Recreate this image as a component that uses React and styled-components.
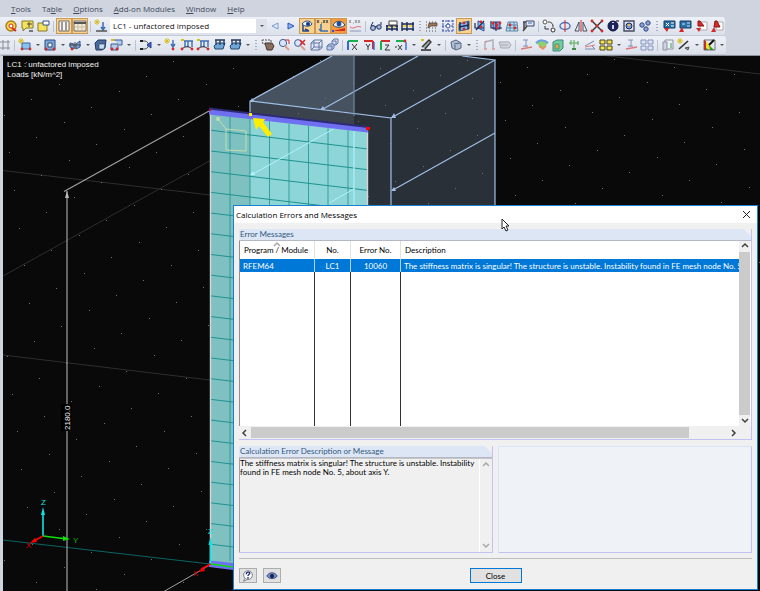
import React from "react";
import styled, { createGlobalStyle } from "styled-components";

const colors = {
    frame: "#cfd4de",
    scene: "#090909",
    ink: "#1c2b5a",
    red: "#d42a2a",
    green: "#17b04a",
    blue: "#3f6fb5",
    yellow: "#f2d83c",
    teal: "#1f9291",
    steel: "#a0bfe6",
    select: "#0078d7",
    face: "#f0f0f0",
    lilac: "#c2c2f2",
    caption: "#34597f",
};

const ui = `"Open Sans", "Noto Sans", sans-serif`;
const sans = `"Liberation Sans", Arial, sans-serif`;
const dialogFont = `Lato, "Liberation Sans", sans-serif`;

const GlobalStyle = createGlobalStyle`
    * { box-sizing: border-box; }
    body {
        margin: 0;
        background: ${colors.frame};
        font-family: ${sans};
        font-size: 8px;
    }
    button, select, textarea { font: inherit; }
`;

const star = <path d="M4 1v6M1 4h6M2 2l4 4M6 2L2 6" stroke="#d9bd1c" />;
const dotRed = (x, y) => <circle cx={x} cy={y} r="1.4" fill={colors.red} stroke="none" />;

const icons = {
    target: (
        <>
            <circle cx="8" cy="8" r="5" fill="#f7d64a" stroke="#a8801a" strokeWidth="1.4" />
            <circle cx="8" cy="8" r="2" fill="#fff" stroke={colors.red} />
            <path d="M9 10l4 3" stroke={colors.red} strokeWidth="2" />
        </>
    ),
    note: (
        <>
            <path d="M3 3h11v7H7l-3 3v-3H3z" fill="#f5e35a" stroke="#8a7a24" />
            <path d="M10 4v5M8 6h5" stroke="#444" />
            <path d="M10 13h4" stroke="#777" strokeWidth="2" />
        </>
    ),
    folder: (
        <>
            <path d="M3 5h9v8H3z" fill="#f5e35a" stroke="#8a7a24" />
            <path d="M8 3h6v4H8z" fill="#fff" stroke="#34527e" />
        </>
    ),
    columns: (
        <>
            <path d="M3 3h10v10H3z" fill="#f6f6f6" stroke="#6d6a66" />
            <path d="M6 4v9M10 4v9" stroke="#9c9892" strokeWidth="2" />
        </>
    ),
    table: (
        <>
            <path d="M2 3h12v10H2z" fill="#f1ead9" stroke="#6d6a66" />
            <path d="M2 5h12" stroke="#555" strokeWidth="2" />
            <path d="M6 6v7M10 6v7M3 9h11" stroke="#c9bc9f" />
        </>
    ),
    loadcase: (
        <>
            {star}
            <path d="M10 4v7M8 9l2 3 2-3" stroke={colors.blue} strokeWidth="1.5" />
            <path d="M3 13h11" stroke="#555" strokeWidth="1.5" />
        </>
    ),
    prev: <path d="M11 5L5 8l6 3z" fill="#dfe9fa" stroke="#7d9bd0" />,
    next: <path d="M5 5l6 3-6 3z" fill="#8fb2ee" stroke="#2858b8" />,
    eyeForce: (
        <>
            <path d="M3 6c3-4 8-4 10 0-2 3-7 3-10 0z" fill="#e9f2ff" stroke="#244a80" />
            <circle cx="9" cy="6" r="2" fill="#123a7a" stroke="none" />
            <path d="M4 7v6h6M6 11l4 2" stroke="#244a80" strokeWidth="1.5" />
        </>
    ),
    values: (
        <>
            <path d="M2 2l2 3M4 2L2 5M6 5h1M8 2l2 3M10 2L8 5M11 2l2 3M13 2l-2 3" stroke="#333" strokeWidth="0.8" />
            <path d="M6 6v7h7M4 11l2 2" stroke={colors.blue} strokeWidth="1.5" />
        </>
    ),
    eyeResult: (
        <>
            <path d="M2 7c3-5 9-5 12 0-3 3-9 3-12 0z" fill="#f5f2ea" stroke="#244a80" />
            <circle cx="8" cy="6" r="2.4" fill="#1c4d9c" stroke="none" />
            <path d="M2 13l12-3v3z" fill={colors.red} stroke="none" />
            <path d="M2 12v2" stroke="#3a50d8" strokeWidth="2" />
        </>
    ),
    diagramValues: (
        <>
            <path d="M2 2l2 3M4 2L2 5M6 5h1M8 2l2 3M10 2L8 5M11 2l2 3M13 2l-2 3" stroke="#888" strokeWidth="0.8" />
            <path d="M3 9c4 3 6-2 11 0" stroke="#e06c6c" />
            <path d="M3 13h11" stroke="#8d96b8" />
        </>
    ),
    glasses: (
        <>
            <circle cx="5" cy="10" r="2.4" fill="#a9bfe0" stroke={colors.ink} />
            <circle cx="11" cy="9" r="2.2" fill="#a9bfe0" stroke={colors.ink} />
            <path d="M3 8l2-4M7 9l2-1M13 7V4" stroke={colors.ink} />
        </>
    ),
    calcPrint: (
        <>
            <path d="M3 13V7M8 13V7M13 13V7M2 8h12M2 11h12" stroke={colors.ink} strokeWidth="1.4" />
            <path d="M5 3h8v4H5z" fill="#fff" stroke="#444" />
            <path d="M4 9h2M9 9h2" stroke={colors.yellow} strokeWidth="1.4" />
        </>
    ),
    calcAll: (
        <>
            <path d="M2 13V4M7 13V4M13 13V4M2 6h12M2 11h12" stroke={colors.ink} strokeWidth="1.4" />
            <path d="M3 8h3M9 8h3" stroke={colors.yellow} strokeWidth="2" />
        </>
    ),
    gridHand: (
        <>
            <path d="M2 4h12M2 7h12M2 10h12M2 13h12" stroke="#555" strokeDasharray="1 2" />
            <path d="M5 5h8v3H7l-3 2z" fill="#9c7558" stroke="#4b3a31" strokeWidth="0.7" />
        </>
    ),
    snap: (
        <>
            <path d="M2 3h12M2 8h12M2 13h12M3 2v12M8 2v12M13 2v12" stroke="#3b50a8" strokeDasharray="2 1" />
            <circle cx="8" cy="8" r="2" fill="#fff" stroke="#3b50a8" />
        </>
    ),
    planeXY: (
        <>
            <path d="M3 6l10-3v8L3 13z" fill="#84bdf0" stroke="#2b5c9b" />
            <path d="M4 4v8M12 4v7M3 9l10-2" stroke={colors.ink} strokeWidth="1.4" />
            {dotRed(8, 5)}
            {dotRed(8, 11)}
        </>
    ),
    planeYZ: (
        <>
            <path d="M6 3l6 2v8l-6-3z" fill="#84bdf0" stroke="#2b5c9b" />
            <path d="M3 5v5h9M4 12l8-9" stroke={colors.ink} strokeWidth="1.2" />
            {dotRed(9, 9)}
            {dotRed(9, 4)}
        </>
    ),
    planeXZ: (
        <>
            <path d="M5 4h7v7H5z" fill="#84a5e0" stroke="#253d7c" />
            <path d="M3 3v7h11M8 4v9" stroke={colors.ink} strokeWidth="1.2" />
            {dotRed(5, 5)}
            {dotRed(9, 10)}
            {dotRed(12, 5)}
            {dotRed(9, 7)}
        </>
    ),
    mesh: (
        <>
            <path d="M4 4h9l1 9H2z" fill="#bcdff5" stroke="#5c85a5" />
            <path d="M3 7h10M3 10h11M6 4v9M10 4v9" stroke="#5c85a5" />
            {dotRed(6, 7)}
            {dotRed(11, 10)}
        </>
    ),
    select: (
        <>
            <path d="M6 3h8v5H6z" fill="#e5e8f4" stroke="#38456c" />
            <path d="M3 13L7 8M4 4v8M3 4h3" stroke="#444" strokeWidth="1.5" />
            <path d="M8 5h4" stroke={colors.blue} />
        </>
    ),
    move: (
        <>
            <circle cx="4" cy="4" r="2" fill="#fff" stroke="#555" />
            <circle cx="12" cy="12" r="2" fill="#fff" stroke="#333" />
            <path d="M7 4c4 0 5 2 5 5M4 8v3h4" stroke="#333" />
        </>
    ),
    rotate: (
        <>
            <ellipse cx="8" cy="8" rx="5" ry="3.5" stroke="#4a70b8" strokeWidth="1.4" />
            <path d="M8 2v12" stroke={colors.red} />
        </>
    ),
    mirror: (
        <>
            <path d="M6 4v9H2zM10 4v9h4z" fill="#eef1f8" stroke="#4b4f5e" />
            <path d="M8 2v12" stroke={colors.red} />
        </>
    ),
    split: (
        <>
            <path d="M3 3l10 10M13 3L3 13" stroke="#333" strokeWidth="1.4" />
            {dotRed(3, 3)}
            {dotRed(13, 3)}
            {dotRed(3, 13)}
            {dotRed(13, 13)}
            {dotRed(8, 8)}
        </>
    ),
    info: (
        <>
            <circle cx="8" cy="8" r="5" fill="#1b245c" stroke="#0f1438" />
            <path d="M8 7v4" stroke="#fff" strokeWidth="1.6" />
            <path d="M8 4v1" stroke="#fff" strokeWidth="1.6" />
            <path d="M11 3h3" stroke="#777" strokeWidth="2" />
        </>
    ),
    props: (
        <>
            <path d="M3 3h10v10H3z" fill="#e2e6f2" stroke="#454b66" strokeWidth="1.4" />
            <circle cx="8" cy="8" r="3" fill="#7898cf" stroke={colors.ink} />
            <path d="M7 7h2" stroke="#f0c040" strokeWidth="2" />
        </>
    ),
    gears: (
        <>
            <circle cx="5" cy="7" r="2.2" fill="#8aa2d8" stroke="#34487e" />
            <circle cx="11" cy="5" r="2.2" fill="#8aa2d8" stroke="#34487e" />
            <circle cx="9" cy="11" r="2.2" fill="#8aa2d8" stroke="#34487e" />
        </>
    ),
    tableIn: (
        <>
            <path d="M3 3h11v7H3z" fill="#2870a8" stroke="#173c69" />
            <path d="M5 5l3 3M8 5L5 8M10 5h3M10 8h3" stroke="#fff" />
            <path d="M3 10h5l-2 4z" fill={colors.red} stroke="none" />
        </>
    ),
    tableOut: (
        <>
            <path d="M3 3h11v7H3z" fill="#2870a8" stroke="#173c69" />
            <path d="M5 6h3M10 5h3M10 8h3" stroke="#cfe3f5" />
            <path d="M2 14h5l-2-5z" fill={colors.red} stroke="none" />
        </>
    ),
    pdfIn: (
        <>
            <path d="M7 4h7v8H7z" fill="#fff" stroke="#aaa" />
            <path d="M5 3h2l4 5H5z" fill={colors.red} stroke="#8e1414" />
            <path d="M3 10h5l-2 4z" fill={colors.red} stroke="none" />
        </>
    ),
    pdfOut: (
        <>
            <path d="M7 4h7v8H7z" fill="#fff" stroke="#aaa" />
            <path d="M6 3h2l3 6H5z" fill={colors.red} stroke="#8e1414" />
            <path d="M2 14h5l-2-5z" fill={colors.red} stroke="none" />
        </>
    ),
    hash: <path d="M3 3v10M8 3v10M0 5h10M0 11h10" stroke="#8a8f9c" />,
    surface: (
        <>
            {star}
            <path d="M5 6h8v6H5z" fill="#8ec0ec" stroke="#3769a4" />
            {dotRed(5, 12)}
            {dotRed(13, 12)}
        </>
    ),
    opening: (
        <>
            <path d="M3 3h10v10H3z" fill="#7fa9d8" stroke="#2d4d7d" />
            <path d="M6 6h4v4H6z" fill="#f1f4fa" stroke="#2d4d7d" />
            {dotRed(4, 12)}
            {dotRed(12, 12)}
        </>
    ),
    beam: (
        <>
            <path d="M3 6l4 1v5l-4-2zM9 7l4-3v6l-4 2z" fill="#7fa9d8" stroke="#35588c" />
            <path d="M2 8h12M8 5v7" stroke="#444" />
            {dotRed(5, 12)}
        </>
    ),
    solid: (
        <>
            <path d="M3 6l3-3h8l-1 8-3 2H4z" fill="#4c6a9c" stroke="#24395f" />
            <path d="M7 7h6l-1 5H7z" fill="#c5dcf5" stroke="#24395f" strokeWidth="0.6" />
        </>
    ),
    solidNew: (
        <>
            <path d="M3 7h7v6H3zM6 3h8v5h-3" fill="#b6cdea" stroke="#3a5d8e" />
            <path d="M3 3h3" stroke="#d9bd1c" strokeWidth="2" />
            {dotRed(4, 12)}
            {dotRed(9, 12)}
        </>
    ),
    release: (
        <>
            <path d="M3 4h4c3 0 3 4 5 4M3 12h4c3 0 3-4 5-4" stroke="#555" />
            <path d="M13 5v6l-4-3z" fill="#3d68c8" stroke="#233f86" />
            <path d="M2 4h3M2 12h3" stroke="#222" strokeWidth="2" />
        </>
    ),
    nodeLoad: (
        <>
            {star}
            <path d="M10 3v6M8 7l2 3 2-3" stroke={colors.blue} strokeWidth="1.4" />
            {dotRed(10, 12)}
        </>
    ),
    memberLoad: (
        <>
            <path d="M5 4h9M6 4v6M9 4v6M13 4v6" stroke={colors.blue} strokeWidth="1.4" />
            <path d="M3 12c3-3 7-3 10 0" stroke="#222" />
            <path d="M2 3h3" stroke="#d9bd1c" strokeWidth="2" />
            {dotRed(3, 12)}
            {dotRed(13, 12)}
        </>
    ),
    surfaceLoad: (
        <>
            <path d="M3 9l3-3h8l-2 6H4z" fill="#6fa8d8" stroke="#214a70" />
            <path d="M5 3v5M9 3v5M13 3v5M4 3h10" stroke="#24395f" strokeWidth="1.3" />
        </>
    ),
    handTool: (
        <>
            <path d="M5 6h7l2 3-2 4H7z" fill="#8e6f5d" stroke="#43342c" />
            <path d="M2 3h9v4H3z" stroke="#555" strokeDasharray="2 1" />
        </>
    ),
    zoomWindow: (
        <>
            <circle cx="7" cy="6" r="3.6" fill="#d8e6fb" stroke="#3e5da0" />
            <path d="M9 9l4 4" stroke="#e09a86" strokeWidth="2" />
            <path d="M9 3h4v4" stroke={colors.red} />
        </>
    ),
    zoomOff: (
        <>
            <circle cx="6" cy="6" r="3.4" fill="#d8e6fb" stroke="#3e5da0" />
            <path d="M9 9l4 4" stroke="#e09a86" strokeWidth="2" />
            <path d="M8 3l5 5M13 3L8 8" stroke={colors.red} strokeWidth="1.6" />
        </>
    ),
    cube: (
        <path d="M3 6l3-3h8v8l-3 2H3zM3 6h8v7M11 6l3-3M6 3v7h8M3 13l3-3" stroke="#6376a8" />
    ),
    cubes: (
        <>
            <path d="M8 4l2-2h4v4l-2 2H8zM8 4h4v4" fill="#d6e0f4" stroke="#6376a8" />
            <path d="M3 9l2-2h5v4l-2 2H3zM3 9h5v4" fill="#b9cbec" stroke="#6376a8" />
        </>
    ),
    axisX: (
        <>
            <path d="M3 4h10" stroke={colors.green} strokeWidth="2" />
            <path d="M3 4v9" stroke="#3468d4" strokeWidth="2" />
            <path d="M7 7l5 6M12 7l-5 6" stroke="#333" />
        </>
    ),
    axisY: (
        <>
            <path d="M3 4h9M12 4v8" stroke={colors.red} strokeWidth="2" />
            <path d="M13 5v8" stroke="#3468d4" strokeWidth="1.4" />
            <path d="M5 7l2 3 2-3M7 10v3" stroke="#333" />
        </>
    ),
    axisZ: (
        <>
            <path d="M4 4h9" stroke={colors.red} strokeWidth="2" />
            <path d="M4 4v9" stroke={colors.green} strokeWidth="2" />
            <path d="M8 8h4l-4 5h5" stroke="#333" />
        </>
    ),
    axisMinusX: (
        <>
            <path d="M3 4h9" stroke={colors.green} strokeWidth="2" />
            <path d="M13 5v8" stroke="#3468d4" strokeWidth="1.4" />
            <path d="M2 10h2M5 8l4 5M9 8l-4 5" stroke="#333" />
            {dotRed(12, 4)}
        </>
    ),
    pencil: (
        <>
            <path d="M3 3h3" stroke="#d9bd1c" strokeWidth="2" />
            <path d="M3 13h10" stroke="#333" strokeWidth="1.6" />
            <path d="M4 10l7-7 2 2-6 7" fill="#9aa" stroke="#333" strokeWidth="1.3" />
        </>
    ),
    clip: (
        <>
            <path d="M3 5l5-2 5 3v5l-5 2-4-2z" fill="#b1bfd6" stroke="#56657f" />
            <path d="M6 7l6-1M7 12V8" stroke="#56657f" />
        </>
    ),
    frame: (
        <>
            <path d="M4 12V5l8-2v9" stroke="#a9adb8" strokeWidth="1.4" />
            <path d="M3 12h3M11 12h3M4 5l2-1" stroke="#d89696" strokeWidth="1.4" />
        </>
    ),
    tagGrey: <path d="M2 5h10l2 3-2 3H4zM4 8h7" fill="#d4d6dc" stroke="#a6a8b0" />,
    momentFaint: (
        <>
            <path d="M5 3h5M8 3v7M5 9h5" stroke="#8592bc" />
            <path d="M3 12l11-2" stroke="#e07a7a" strokeWidth="1.4" />
        </>
    ),
    rainbow: (
        <>
            <path d="M2 6c4-4 9-3 12 0l-5 6z" fill="#8ed070" stroke="none" />
            <path d="M2 6c4-4 9-3 12 0" stroke="#6c9de8" strokeWidth="2" />
            <path d="M5 9l4 3 3-3" stroke="#ef8b60" strokeWidth="1.6" />
        </>
    ),
    cubeColor: (
        <>
            <path d="M3 5l4-2h6v8l-3 3H3z" fill="#75cba0" stroke="#3a8a80" />
            <path d="M5 7h4v5H5z" fill="#e0a050" stroke="#40a070" />
        </>
    ),
    supports: (
        <>
            <path d="M3 6h10M8 3v10M5 3v5M12 4v4" stroke="#7aba7a" strokeWidth="1.4" />
            <path d="M6 12h4" stroke="#3d8c4a" strokeWidth="2" />
        </>
    ),
    sections: (
        <>
            <path d="M3 9l9-5M3 12h10l-3-3" stroke="#7f8db4" />
            <path d="M3 10l10-2" stroke="#e07a7a" />
        </>
    ),
    panels: (
        <>
            <path d="M2 3h5v4H2zM9 3h5v4H9zM2 9h5v4H2zM9 9h5v4H9z" fill="#f6e24e" stroke="#4b4620" />
        </>
    ),
    windows: (
        <path d="M2 3h5v4H2zM9 3h5v4H9zM2 9h5v4H2zM9 9h5v4H9z" fill="#dde3f4" stroke="#8793be" />
    ),
    sheets: (
        <>
            <path d="M5 3h8v9H5z" fill="#edf0f5" stroke="#8b93a2" />
            <path d="M3 5h4v8H3z" fill="#cdd5e2" stroke="#8b93a2" />
            <path d="M11 6v5" stroke="#7dbb8e" strokeWidth="1.6" />
        </>
    ),
    wand: (
        <>
            {star}
            <path d="M3 12l9-8" stroke="#333" strokeWidth="1.6" />
            <path d="M9 11l4-1-1 3z" fill="#9b9b9b" stroke="#555" />
        </>
    ),
    palette: (
        <>
            <path d="M4 3l9 10H4z" fill="#f4e02e" stroke="none" />
            <path d="M3 3l2 1v9H3z" fill={colors.red} stroke="none" />
            <path d="M5 11l3 2H5zM8 8l5 5H9z" fill="#1fa040" stroke="none" />
            <path d="M3 3h11v10H3z" stroke="#555" strokeWidth="0.8" />
            <path d="M8 8l5-5" stroke="#111" strokeWidth="2" />
        </>
    ),
    help: (
        <>
            <circle cx="8" cy="7" r="5" fill="#fdfdfd" stroke="#6d7078" />
            <path d="M4 11l-1 3 4-2" fill="#fdfdfd" stroke="#6d7078" />
            <path d="M6 6c0-3 4-3 4-1 0 1-2 1-2 3M8 9v2" stroke="#1c2f72" strokeWidth="1.5" />
        </>
    ),
    eye: (
        <>
            <path d="M2 8c3-5 9-5 12 0-3 4-9 4-12 0z" fill="#7d90c6" stroke="#2d3f7c" />
            <circle cx="8" cy="8" r="2.4" fill="#10204f" stroke="none" />
        </>
    ),
};

const Icon = ({ name, size = 16 }) => (
    <svg width={size} height={size} viewBox="0 0 16 16" fill="none" aria-hidden="true">
        {icons[name]}
    </svg>
);

// "|" separator, ":" group grip, "v" drop-down arrow, "*" or "!" before a name marks it pressed
const mainTools = ["target", "note", "folder", "|", "*columns", "*table", "|", "loadcase"];
const viewTools = [
    "prev", "next", "*eyeForce", "*values", "!eyeResult", "diagramValues", "|",
    "glasses", "calcPrint", "calcAll", ":",
    "gridHand", "snap", "*planeXY", "planeYZ", "planeXZ", "mesh", "select", "|",
    "move", "rotate", "mirror", "split", "info", "props", "gears", ":",
    "tableIn", "tableOut", "pdfIn", "pdfOut",
];
const insertTools = [
    "|", "surface", "v", "opening", "v", "beam", "v", "solid", "solidNew", "v", "|",
    "release", "v", "nodeLoad", "memberLoad", "memberLoad", "surfaceLoad", "surfaceLoad", "v", ":",
    "handTool", "zoomWindow", "zoomOff", "cube", "cubes", "|",
    "axisX", "axisY", "axisZ", "axisMinusX", "v", "pencil", "v", "|", "clip", "v", ":",
    "frame", "tagGrey", "|", "momentFaint", "rainbow", "cubeColor", "supports", "sections",
    "panels", "v", "momentFaint", "windows", "|", "sheets", "wand", "v", "palette", "v",
];

const Tools = ({ items }) =>
    items.map((item, i) => {
        if (item === "|") return <Separator key={i} />;
        if (item === ":") return <Grip key={i} />;
        if (item === "v") return <Drop key={i} aria-label="More"><Arrow /></Drop>;
        const flag = item[0];
        const name = item.replace(/^[*!]/, "");
        return (
            <ToolButton key={i} $active={flag === "*" || flag === "!"} $hot={flag === "!"} aria-label={name}>
                <Icon name={name} />
            </ToolButton>
        );
    });

const menus = [
    ["", "T", "ools"],
    ["Ta", "b", "le"],
    ["", "O", "ptions"],
    ["", "A", "dd-on Modules"],
    ["", "W", "indow"],
    ["", "H", "elp"],
];

// ground grid points seen in perspective
const gridPoints = [];
for (let i = -8; i < 20; i++) {
    for (let j = -16; j < 40; j++) {
        const x = Math.round(31.3 + i * 59.8 - j * 27.4);
        const y = Math.round(99.3 + i * 7.3 + j * 15.2);
        if (x > 3 && x < 760 && y > 56 && y < 591) gridPoints.push([x, y]);
    }
}

const meshRows = Array.from({ length: 21 }, (_, i) => 130.3 + i * 20.7);
const meshColumns = [230, 250, 269.5, 289, 308.5, 328, 348];

const Scene = () => (
    <Canvas viewBox="3 56 757 535" preserveAspectRatio="xMinYMin slice" aria-hidden="true">
        <g stroke="#2e2e2e">
            <path d="M3 170.5l207 24.5M3 276L398 56M3 355l207 25M600 55l160 19" />
        </g>
        <path d="M3 540l207 24" stroke="#0c6464" />

        <path d="M250 101L332 56H354V113z" fill="#46525f" />
        <path d="M354 56h108l33 4v150H250V101l104 12z" fill="#2a3038" />
        <path d="M250 101l104 12v14l-104-12z" fill="#3a434d" />
        {gridPoints.map(([x, y]) => (
            <rect key={`${x}-${y}`} x={x} y={y} width="1" height="1" fill="#707070" />
        ))}
        <g stroke={colors.steel} strokeWidth="1.2" fill="none">
            <path d="M250 115V101L332 56M251 101l140 17v100M391 118l104-58v150M495 60l-33-4" />
            <path d="M323 109l95-53M393 190l102-57" />
            <path d="M354 56v60" stroke="#6f87a3" />
        </g>
        <g fill={colors.steel}>
            <path d="M250 102l2-4 3 4zM320 110l3-4 2 4zM391 118l3-5 2 5zM391 191l3-4 2 4z" />
        </g>

        <path d="M210 112l158 20v449l-158-19z" fill="#7fc1c1" />
        <path d="M250 117l118 15v449l-118-14z" fill="#8dd5d6" />
        <g stroke={colors.teal}>
            {meshRows.map((y) => (
                <path key={y} d={`M211 ${y}l156 18.6`} />
            ))}
            {meshColumns.map((x) => (
                <path key={x} d={`M${x} ${114 + (x - 210) * 0.12}V561`} opacity="0.8" />
            ))}
        </g>
        <path d="M354 131v79" stroke="#a5e9f2" strokeWidth="1.6" />
        <path d="M253 174l84-47M329 203l25-14" stroke="#b0f3fb" />
        <path d="M250 175l3-4 2 4z" fill="#b0f3fb" />
        <path d="M210.5 114v446M367.5 131v80" stroke="#d6d6d6" strokeWidth="1.4" />
        <path d="M218 119l8 10 20 2v20l-20-1v-21" stroke="#c3dcae" fill="none" />
        <circle cx="218" cy="119" r="2" fill="#c3dcae" />
        <path d="M209 107.500l159 18.500v3l-159-19z" fill="#2d2a78" />
        <path d="M209 109.500l159 18.500v4.500l-159-18z" fill="#6f6ff2" />
        <path d="M249 113h3v3h-3z" fill="#ffee00" />
        <path d="M253 118l12 1-2 3 9 12-4 3-9-11-3 4z" fill="#ffee00" />
        <path d="M366 127h4v3h-4z" fill="#f00" />
        <path d="M209 109h2v2h-2z" fill="#b01030" />
        <path d="M209 560.500l24 2.500v7l-24-3z" fill="#6f6ff2" />

        <g stroke="#a0a0a0" fill="none">
            <path d="M209 111L64 191.500M67 191v400" strokeWidth="1.200" />
            <path d="M210 565l-47 27" />
        </g>
        <path d="M65 198l2-7 2 7z" fill="#bbb" />
        <rect x="61" y="404" width="11" height="27" fill="#000" />
        <AxisLabel transform="translate(70 430) rotate(-90)" fill="#eee">2180.0</AxisLabel>

        <g strokeWidth="1.600">
            <path d="M43 536v-24M210.500 564v-22" stroke="#0de5e5" />
            <path d="M43 536l24 3M210.500 564l22 3" stroke="#0be00b" />
            <path d="M43 536l-9 5M210.500 564l-9 5" stroke="#f00" />
        </g>
        <path d="M41 515l2-8 2 8zM208.500 545l2-8 2 8z" fill="#0de5e5" />
        <path d="M63 536l7 3-7 2z" fill="#0be00b" />
        <path d="M30 543l5-5 2 4zM198 572l5-5 2 4z" fill="#f00" />
        <AxisLabel x="41" y="505" fill="#0de5e5">Z</AxisLabel>
        <AxisLabel x="208" y="534" fill="#0de5e5">Z</AxisLabel>
        <AxisLabel x="73" y="543" fill="#0bb80b">Y</AxisLabel>
        <AxisLabel x="26" y="548" fill="#d00">X</AxisLabel>
        <AxisLabel x="193" y="576" fill="#d00">X</AxisLabel>
    </Canvas>
);

const Chevron = ({ dir, faint }) => {
    const d = {
        up: "M2 5l3-3 3 3",
        down: "M2 3l3 3 3-3",
        left: "M6 2L3 5l3 3",
        right: "M4 2l3 3-3 3",
    }[dir];
    return (
        <svg width="10" height="9" viewBox="0 0 10 9" fill="none" aria-hidden="true">
            <path d={d} stroke={faint ? "#a8a8a8" : "#404040"} strokeWidth="1.5" />
        </svg>
    );
};

const message =
    "The stiffness matrix is singular! The structure is unstable. Instability found in FE mesh node No. 5, about axis Y.";

const App = () => {
    return (
        <Main>
            <GlobalStyle />
            <MenuBar>
                {menus.map(([before, key, after]) => (
                    <MenuItem key={after}>
                        {before}<u>{key}</u>{after}
                    </MenuItem>
                ))}
            </MenuBar>
            <Toolbar>
                <Tools items={mainTools} />
                <SelectBox>
                    <CaseSelect aria-label="Load case" defaultValue="LC1">
                        <option value="LC1">LC1 - unfactored imposed</option>
                    </CaseSelect>
                    <SelectArrow><Arrow /></SelectArrow>
                </SelectBox>
                <Tools items={viewTools} />
            </Toolbar>
            <Toolbar>
                <HalfButton aria-label="hash"><Icon name="hash" /></HalfButton>
                <Tools items={insertTools} />
            </Toolbar>

            <Viewport>
                <Scene />
                <Caption>
                    LC1 : unfactored imposed<br />
                    Loads [kN/m^2]
                </Caption>

                <Dialog role="dialog" aria-labelledby="dialog-title">
                    <TitleBar>
                        <span id="dialog-title">Calculation Errors and Messages</span>
                        <CloseIcon aria-label="Close window">
                            <svg width="9" height="9" viewBox="0 0 9 9" aria-hidden="true">
                                <path d="M1 1l7 7M8 1L1 8" stroke="#222" />
                            </svg>
                        </CloseIcon>
                    </TitleBar>
                    <Body>
                        <Group>
                            <GroupTitle>Error Messages</GroupTitle>
                            <ListArea>
                                <TableBox>
                                    <ErrorTable>
                                        <colgroup>
                                            <col width="75" />
                                            <col width="36" />
                                            <col width="50" />
                                            <col />
                                        </colgroup>
                                        <thead>
                                            <tr>
                                                <th>
                                                    <SortMark><Chevron dir="up" faint /></SortMark>
                                                    Program / Module
                                                </th>
                                                <th>No.</th>
                                                <th>Error No.</th>
                                                <th>Description</th>
                                            </tr>
                                        </thead>
                                        <tbody>
                                            <SelectedRow>
                                                <td>RFEM64</td>
                                                <td>LC1</td>
                                                <td>10060</td>
                                                <td>{message}</td>
                                            </SelectedRow>
                                            <EmptyRow><td /><td /><td /><td /></EmptyRow>
                                        </tbody>
                                    </ErrorTable>
                                </TableBox>
                                <VerticalBar>
                                    <Chevron dir="up" />
                                    <Thumb />
                                    <Chevron dir="down" />
                                </VerticalBar>
                            </ListArea>
                            <HorizontalBar>
                                <Chevron dir="left" />
                                <Track><Thumb $part="92%" /></Track>
                                <Chevron dir="right" />
                            </HorizontalBar>
                        </Group>

                        <Details>
                            <Group>
                                <GroupTitle as="label" htmlFor="description">
                                    Calculation Error Description or Message
                                </GroupTitle>
                                <DescriptionBox>
                                    <Description id="description" readOnly defaultValue={message} />
                                    <FaintBar>
                                        <Chevron dir="up" faint />
                                        <Chevron dir="down" faint />
                                    </FaintBar>
                                </DescriptionBox>
                            </Group>
                            <BlankPanel />
                        </Details>

                        <Footer>
                            <FooterTools>
                                <SmallButton aria-label="Help"><Icon name="help" size={14} /></SmallButton>
                                <SmallButton aria-label="View"><Icon name="eye" size={14} /></SmallButton>
                            </FooterTools>
                            <CloseButton>Close</CloseButton>
                        </Footer>
                    </Body>
                </Dialog>

                <Pointer width="10" height="14" viewBox="0 0 10 14" aria-hidden="true">
                    <path d="M1 1v10l2-2 2 4 2-1-2-4h3z" fill="#fff" stroke="#222" />
                </Pointer>
            </Viewport>
        </Main>
    );
};

export default App;

const Main = styled.div`
    display: flex;
    flex-direction: column;
    min-height: 100vh;
`
const MenuBar = styled.nav`
    display: flex;
    gap: 11px;
    height: 17px;
    padding-left: 11px;
    align-items: center;
`
const MenuItem = styled.button`
    padding: 0;
    border: none;
    background: none;
    font-family: ${ui};
    font-size: 8px;
    line-height: 12px;
    color: #3f4a60;
    white-space: nowrap;
`
const Toolbar = styled.div`
    display: flex;
    align-items: center;
    align-self: flex-start;
    height: 19px;
    padding: 0 0 0 3px;
    border-radius: 0 3px 3px 0;
    border-bottom: 1px solid #c3c9d6;
    background: linear-gradient(#eef1f7, #dbe0ea);
    & + & {
        padding-left: 0;
    }
`
const ToolButton = styled.button`
    display: flex;
    flex: none;
    width: 16px;
    height: 16px;
    padding: 0;
    border: none;
    background: ${({ $active, $hot }) => ($hot ? "#f89a3a" : $active ? "#fbd190" : "none")};
    box-shadow: ${({ $active }) => ($active ? "inset 0 0 0 1px #c99a55" : "none")};
    svg {
        flex: none;
    }
`
const HalfButton = styled(ToolButton)`
    width: 12px;
    overflow: hidden;
`
const Drop = styled.button`
    display: flex;
    align-items: center;
    justify-content: center;
    flex: none;
    width: 9px;
    height: 16px;
    padding: 0;
    border: none;
    background: none;
`
const Arrow = styled.i`
    border: 2px solid transparent;
    border-top-color: #555;
    border-bottom: none;
`
const Separator = styled.div`
    flex: none;
    width: 1px;
    height: 11px;
    margin: 0 2px;
    background: #bcc3d0;
`
const Grip = styled.div`
    flex: none;
    width: 2px;
    height: 11px;
    margin: 0 3px;
    background: repeating-linear-gradient(#a5adbd 0 1px, transparent 1px 3px);
`
const SelectBox = styled.div`
    display: flex;
    flex: none;
    width: 157px;
    height: 14px;
    margin-left: 1px;
    background: #fff;
`
const CaseSelect = styled.select`
    flex: 1;
    appearance: none;
    padding: 0 3px;
    border: none;
    background: #fff;
    font-family: ${ui};
    font-size: 8px;
    line-height: 14px;
    color: #111;
`
const SelectArrow = styled.span`
    display: flex;
    align-items: center;
    justify-content: center;
    width: 11px;
    background: #dde1ea;
    pointer-events: none;
`
const Viewport = styled.main`
    position: relative;
    flex: 1;
    min-height: 536px;
    overflow: hidden;
    border-left: 3px solid ${colors.frame};
    border-top: 1px solid #8d9199;
    background: ${colors.scene};
`
const Canvas = styled.svg`
    position: absolute;
    inset: 0;
    width: 100%;
    height: 100%;
`
const AxisLabel = styled.text`
    font-family: ${sans};
    font-size: 8px;
`
const Caption = styled.p`
    position: relative;
    margin: 0;
    padding: 4px;
    line-height: 10px;
    color: #f2f2f2;
`
const Dialog = styled.section`
    position: absolute;
    top: 149px;
    left: 230px;
    right: 2px;
    border: 1px solid #1a7fd0;
    background: ${colors.face};
    font-family: ${dialogFont};
    color: #000;
`
const TitleBar = styled.header`
    display: flex;
    align-items: center;
    justify-content: space-between;
    height: 17px;
    padding: 0 6px 0 2px;
    background: #fff;
    font-family: ${ui};
    color: #000;
`
const CloseIcon = styled.button`
    display: flex;
    padding: 0;
    border: none;
    background: none;
`
const Body = styled.div`
    padding: 6px 5px;
`
const Group = styled.div`
    display: flex;
    flex-direction: column;
    border-right: 1px solid ${colors.lilac};
    border-bottom: 1px solid ${colors.lilac};
`
const GroupTitle = styled.div`
    height: 12px;
    padding-left: 1px;
    border-bottom: 1px solid #b4b8c4;
    background: linear-gradient(225deg, ${colors.face} 5px, #dce6f5 5px);
    line-height: 11px;
    color: ${colors.caption};
`
const ListArea = styled.div`
    display: flex;
    border-left: 1px solid #8f8f8f;
    background: #fff;
`
const TableBox = styled.div`
    flex: 1;
    min-width: 0;
`
const ErrorTable = styled.table`
    width: 100%;
    table-layout: fixed;
    border-spacing: 0;
    th, td {
        padding: 0 3px;
        overflow: hidden;
        white-space: nowrap;
        text-align: left;
        font-weight: normal;
        line-height: 10px;
    }
    th {
        position: relative;
        height: 18px;
        padding: 0 4px;
        border-right: 1px solid #e2e2e2;
    }
    td {
        border-right: 1px solid #333;
    }
    th:nth-child(2), th:nth-child(3), td:nth-child(2), td:nth-child(3) {
        text-align: center;
    }
    th:last-child, td:last-child {
        border-right: none;
    }
`
const SortMark = styled.span`
    position: absolute;
    top: 0;
    left: 50%;
    line-height: 0;
    margin-left: -5px;
`
const SelectedRow = styled.tr`
    height: 13px;
    background: ${colors.select};
    color: #fff;
    td {
        border-right-color: #b8cfe8;
    }
`
const EmptyRow = styled.tr`
    height: 154px;
`
const VerticalBar = styled.div`
    display: flex;
    flex-direction: column;
    align-items: center;
    justify-content: space-between;
    width: 11px;
    margin-right: 1px;
    padding: 1px 0;
    gap: 1px;
    background: ${colors.face};
    svg {
        flex: none;
    }
`
const HorizontalBar = styled.div`
    display: flex;
    align-items: center;
    height: 13px;
    padding: 0 13px 0 1px;
    gap: 1px;
`
const Track = styled.div`
    flex: 1;
    height: 11px;
`
const Thumb = styled.div`
    flex: 1;
    width: ${({ $part }) => $part || "100%"};
    height: 100%;
    background: #cbcbcb;
`
const Details = styled.div`
    display: grid;
    grid-template-columns: 1fr 1fr;
    gap: 5px;
    margin-top: 6px;
    height: 107px;
`
const DescriptionBox = styled.div`
    display: flex;
    flex: 1;
    border-top: 1px solid #c6c6c6;
    border-left: 1px solid #a0a0a0;
`
const Description = styled.textarea`
    flex: 1;
    min-width: 0;
    padding: 0;
    border: none;
    outline: none;
    overflow: hidden;
    resize: none;
    background: none;
    line-height: 9px;
    color: #000;
`
const FaintBar = styled.div`
    display: flex;
    flex-direction: column;
    justify-content: space-between;
    padding: 2px 1px;
    border-left: 1px solid #fff;
`
const BlankPanel = styled.div`
    border: 1px solid #d9e4f6;
    border-right-color: ${colors.lilac};
    border-bottom-color: ${colors.lilac};
    background: #eff3f8;
`
const Footer = styled.footer`
    display: grid;
    grid-template-columns: 1fr auto 1fr;
    margin-top: 5px;
    padding-top: 9px;
    border-top: 1px solid #bdbdbd;
`
const FooterTools = styled.div`
    display: flex;
    gap: 6px;
`
const SmallButton = styled.button`
    display: flex;
    align-items: center;
    justify-content: center;
    width: 18px;
    height: 15px;
    padding: 0;
    border: 1px solid #adadad;
    background: #e1e1e1;
`
const CloseButton = styled.button`
    width: 52px;
    height: 15px;
    padding: 0;
    border: 1px solid ${colors.select};
    background: #e1e1e1;
    color: #000;
`
const Pointer = styled.svg`
    position: absolute;
    top: 162px;
    left: 498px;
`
